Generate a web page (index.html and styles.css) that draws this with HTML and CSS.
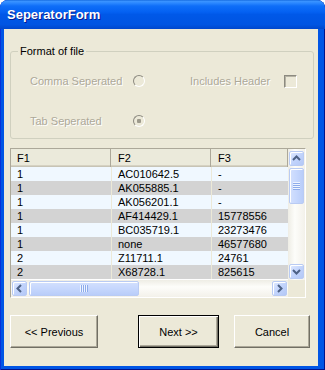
FILE: index.html
```html
<!DOCTYPE html>
<html lang="en">
<head>
  <meta charset="UTF-8">
  <title>SeperatorForm</title>
  <link rel="stylesheet" href="styles.css">
</head>
<body>
  <div class="window">
    <div class="titlebar">SeperatorForm</div>
    <div class="client">
      <fieldset class="group">
        <legend>Format of file</legend>
        <div class="options">
          <span class="opt-label">Comma Seperated</span>
          <span class="radio"></span>
          <span class="opt-label">Includes Header</span>
          <span class="check"></span>
          <span class="opt-label">Tab Seperated</span>
          <span class="radio checked"></span>
        </div>
      </fieldset>

      <div class="grid">
        <div class="grid-main">
          <table class="data">
            <colgroup><col class="c1"><col class="c2"><col class="c3"></colgroup>
            <thead>
              <tr><th>F1</th><th>F2</th><th>F3</th></tr>
            </thead>
            <tbody>
              <tr><td>1</td><td>AC010642.5</td><td>-</td></tr>
              <tr><td>1</td><td>AK055885.1</td><td>-</td></tr>
              <tr><td>1</td><td>AK056201.1</td><td>-</td></tr>
              <tr><td>1</td><td>AF414429.1</td><td>15778556</td></tr>
              <tr><td>1</td><td>BC035719.1</td><td>23273476</td></tr>
              <tr><td>1</td><td>none</td><td>46577680</td></tr>
              <tr><td>2</td><td>Z11711.1</td><td>24761</td></tr>
              <tr><td>2</td><td>X68728.1</td><td>825615</td></tr>
            </tbody>
          </table>
          <div class="vscroll">
            <div class="sb-btn"><svg width="13" height="13" viewBox="0 0 13 13"><polyline points="3,8 6.5,4.5 10,8"/></svg></div>
            <div class="vthumb"><span class="grip"></span></div>
            <div class="track"></div>
            <div class="sb-btn"><svg width="13" height="13" viewBox="0 0 13 13"><polyline points="3,5 6.5,8.5 10,5"/></svg></div>
          </div>
        </div>
        <div class="hscroll-row">
          <div class="hscroll">
            <div class="sb-btn"><svg width="13" height="13" viewBox="0 0 13 13"><polyline points="8,3 4.5,6.5 8,10"/></svg></div>
            <div class="hthumb"><span class="grip"></span></div>
            <div class="track"></div>
            <div class="sb-btn"><svg width="13" height="13" viewBox="0 0 13 13"><polyline points="5,3 8.5,6.5 5,10"/></svg></div>
          </div>
          <div class="corner"></div>
        </div>
      </div>

      <div class="buttons">
        <button class="btn btn-prev">&lt;&lt; Previous</button>
        <button class="btn btn-next default">Next &gt;&gt;</button>
        <button class="btn btn-cancel">Cancel</button>
      </div>
    </div>
  </div>
</body>
</html>
```

FILE: styles.css
```css
html, body {
  margin: 0;
  padding: 0;
}
body {
  width: 325px;
  height: 370px;
  overflow: hidden;
  font-family: Tahoma, 'Liberation Sans', Arial, sans-serif;
  font-size: 11px;
  color: #000;
  background: #fff;
}

.window {
  height: 370px;
  display: flex;
  flex-direction: column;
  background: #0055e5;
  border-radius: 8px 8px 0 0;
  box-shadow: inset 1px 0 #0831d9, inset -1px 0 #00138c, inset 0 -1px #00138c;
}
.titlebar {
  height: 29px;
  flex: none;
  display: flex;
  align-items: center;
  padding-left: 7px;
  border-radius: 8px 8px 0 0;
  background: linear-gradient(#0a5fd8 0, #3d95ff 1px, #2c88ff 3px, #0f6ef8 6px, #0461f2 12px, #0058e8 50%, #0055e2 85%, #0047cc 100%);
  color: #fff;
  font-weight: bold;
  font-size: 13px;
  text-shadow: 1px 1px #0a1a8c;
}
.client {
  flex: 1;
  margin: 0 7px 4px 4px;
  background: #ece9d8;
  display: flex;
  flex-direction: column;
  padding: 16px 0 0 6px;
}

/* group box */
.group {
  margin: 0;
  width: 304px;
  box-sizing: border-box;
  border: 1px solid #d0d0bf;
  border-radius: 3px;
  padding: 15px 0 9px 0;
}
.group legend {
  margin-left: 7px;
  padding: 0 2px;
  line-height: 13px;
}
.options {
  display: grid;
  grid-template-columns: 103px 57px 94px 13px;
  grid-auto-rows: 16px;
  row-gap: 24px;
  align-items: center;
  padding-left: 19px;
}
.opt-label {
  color: #aca899;
  text-shadow: 1px 1px #fff;
  white-space: nowrap;
}
.radio {
  width: 12px;
  height: 12px;
  box-sizing: border-box;
  border-radius: 50%;
  border: 1px solid;
  border-color: #8c8a80 #fff #fff #8c8a80;
}
.radio.checked {
  background: radial-gradient(circle, #9d9a8c 0 2px, transparent 2.5px);
}
.check {
  width: 13px;
  height: 13px;
  box-sizing: border-box;
  border: 1px solid;
  border-color: #8c8a80 #fff #fff #8c8a80;
  box-shadow: inset 1px 1px #b5b2a4;
}

/* data grid */
.grid {
  margin-top: 9px;
  width: 296px;
  box-sizing: border-box;
  border: 1px solid;
  border-color: #aca899 #fff #fff #aca899;
  background: #ece9d8;
}
.grid-main {
  display: flex;
  height: 131px;
  background: #fff;
}
.data {
  width: 277px;
  table-layout: fixed;
  border-collapse: separate;
  border-spacing: 0;
  align-self: flex-start;
}
.data .c1, .data .c2 { width: 100px; }
.data .c3 { width: 77px; }
.data th {
  height: 18px;
  padding: 0 0 0 6px;
  text-align: left;
  font-weight: normal;
  background: #ebeadb;
  box-shadow: inset -1px 0 #aca899, inset 0 -1px #c7c4b5, inset 0 -2px #d6d2c2;
}
.data td {
  height: 14px;
  padding: 0 0 0 6px;
  line-height: 14px;
  white-space: nowrap;
  overflow: hidden;
}
.data td + td {
  box-shadow: inset 1px 0 #ece9d8;
  padding-left: 7px;
}
.data th + th {
  padding-left: 7px;
}
.data tbody tr:nth-child(odd) { background: #f0f8ff; }
.data tbody tr:nth-child(even) { background: #d3d3d3; }

/* scrollbars */
.vscroll {
  width: 17px;
  box-sizing: border-box;
  padding: 2px 1px 1px 1px;
  display: flex;
  flex-direction: column;
  background: linear-gradient(to right, #eeede5, #fdfdfa 40%, #f3f1ea);
}
.hscroll-row {
  display: flex;
  height: 17px;
}
.hscroll {
  width: 277px;
  box-sizing: border-box;
  padding: 1px 1px 1px 1px;
  display: flex;
  background: linear-gradient(#eeede5, #fdfdfa 40%, #f3f1ea);
}
.corner {
  flex: 1;
  background: #ece9d8;
}
.track { flex: 1; }
.sb-btn {
  width: 15px;
  height: 15px;
  flex: none;
  box-sizing: border-box;
  border: 1px solid #b9cbf3;
  border-radius: 2px;
  background: linear-gradient(135deg, #e1eaff, #c2d4fc 50%, #b4c8f6);
  box-shadow: inset 1px 1px #fff;
  display: flex;
  align-items: center;
  justify-content: center;
}
.sb-btn svg polyline {
  fill: none;
  stroke: #4d6185;
  stroke-width: 2;
}
.vthumb, .hthumb {
  box-sizing: border-box;
  border: 1px solid #b9cbf3;
  border-radius: 2px;
  background: linear-gradient(to right, #d3e0fd, #c6d7fd 50%, #b9cdf9);
  box-shadow: inset 1px 1px #fff;
  display: flex;
  align-items: center;
  justify-content: center;
}
.vthumb {
  height: 36px;
  margin-top: 2px;
}
.hthumb {
  width: 110px;
  margin-left: 2px;
  background: linear-gradient(#d3e0fd, #c6d7fd 50%, #b9cdf9);
}
.vthumb .grip {
  width: 7px;
  height: 8px;
  background: repeating-linear-gradient(#eef4ff 0 1px, #8dabeb 1px 2px);
}
.hthumb .grip {
  width: 8px;
  height: 7px;
  background: repeating-linear-gradient(to right, #eef4ff 0 1px, #8dabeb 1px 2px);
}

/* buttons */
.buttons {
  display: flex;
  margin-top: 17px;
}
.btn {
  height: 33px;
  box-sizing: border-box;
  padding: 0;
  font: inherit;
  color: #000;
  background: #ece9d8;
  border: 1px solid;
  border-color: #fff #716f64 #716f64 #fff;
  box-shadow: inset -1px -1px #aca899;
  border-radius: 0;
}
.btn-prev { width: 88px; }
.btn-next { width: 81px; margin-left: 40px; }
.btn-cancel { width: 76px; margin-left: 15px; }
.btn.default {
  border: 1px solid #000;
  box-shadow: inset 1px 1px #fff, inset -1px -1px #716f64, inset -2px -2px #aca899;
}
```
